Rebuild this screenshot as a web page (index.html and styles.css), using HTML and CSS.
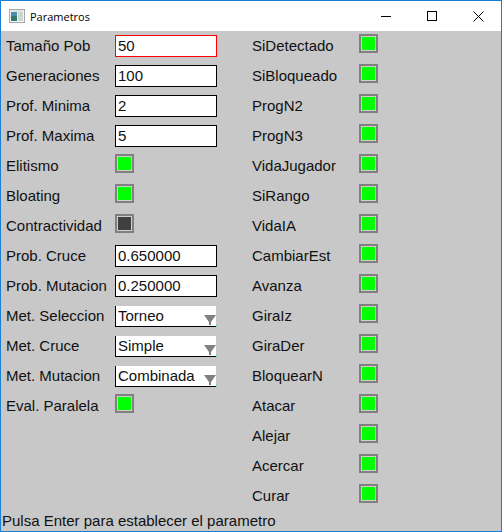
FILE: index.html
```html
<!DOCTYPE html>
<html>
<head>
<meta charset="utf-8">
<link rel="stylesheet" href="styles.css">
</head>
<body>
<div class="window">
  <div class="titlebar">
    <svg class="appicon" width="16" height="14" viewBox="0 0 16 14">
      <rect x="0.5" y="0.5" width="15" height="13" fill="#f4f4f4" stroke="#a9a9a9"/>
      <rect x="2" y="3" width="6" height="9" fill="#2f7a6a"/>
      <rect x="2" y="3" width="6" height="4" fill="#4a8fa8"/>
      <rect x="9" y="3" width="5" height="9" fill="#c9d9d2"/>
      <rect x="2" y="1.5" width="12" height="1" fill="#d0d0d0"/>
    </svg>
    <span class="title">Parametros</span>
    <div class="controls">
      <div class="ctl"><svg width="10" height="10" viewBox="0 0 10 10"><line x1="0" y1="5.5" x2="10" y2="5.5" stroke="#000" stroke-width="1"/></svg></div>
      <div class="ctl"><svg width="10" height="10" viewBox="0 0 10 10"><rect x="0.5" y="0.5" width="9" height="9" fill="none" stroke="#000" stroke-width="1"/></svg></div>
      <div class="ctl"><svg width="11" height="11" viewBox="0 0 11 11"><path d="M0.5 0.5 L10.5 10.5 M10.5 0.5 L0.5 10.5" stroke="#000" stroke-width="1"/></svg></div>
    </div>
  </div>
  <div class="content">
    <div class="left">
      <div class="lbl">Tamaño Pob</div><div class="cell"><div class="field active">50</div></div>
      <div class="lbl">Generaciones</div><div class="cell"><div class="field">100</div></div>
      <div class="lbl">Prof. Minima</div><div class="cell"><div class="field">2</div></div>
      <div class="lbl">Prof. Maxima</div><div class="cell"><div class="field">5</div></div>
      <div class="lbl">Elitismo</div><div class="cell"><div class="check on"></div></div>
      <div class="lbl">Bloating</div><div class="cell"><div class="check on"></div></div>
      <div class="lbl">Contractividad</div><div class="cell"><div class="check off"></div></div>
      <div class="lbl">Prob. Cruce</div><div class="cell"><div class="field">0.650000</div></div>
      <div class="lbl">Prob. Mutacion</div><div class="cell"><div class="field">0.250000</div></div>
      <div class="lbl">Met. Seleccion</div><div class="cell"><div class="combo"><span>Torneo</span><svg class="arrow" width="12" height="11" viewBox="0 0 12 11"><polygon points="0,0 12,0 7,7 7,10 5,10 5,7" fill="#808080"/></svg><i class="dot"></i></div></div>
      <div class="lbl">Met. Cruce</div><div class="cell"><div class="combo"><span>Simple</span><svg class="arrow" width="12" height="11" viewBox="0 0 12 11"><polygon points="0,0 12,0 7,7 7,10 5,10 5,7" fill="#808080"/></svg><i class="dot"></i></div></div>
      <div class="lbl">Met. Mutacion</div><div class="cell"><div class="combo"><span>Combinada</span><svg class="arrow" width="12" height="11" viewBox="0 0 12 11"><polygon points="0,0 12,0 7,7 7,10 5,10 5,7" fill="#808080"/></svg><i class="dot"></i></div></div>
      <div class="lbl">Eval. Paralela</div><div class="cell"><div class="check on"></div></div>
    </div>
    <div class="right">
      <div class="lbl">SiDetectado</div><div class="cell"><div class="check on"></div></div>
      <div class="lbl">SiBloqueado</div><div class="cell"><div class="check on"></div></div>
      <div class="lbl">ProgN2</div><div class="cell"><div class="check on"></div></div>
      <div class="lbl">ProgN3</div><div class="cell"><div class="check on"></div></div>
      <div class="lbl">VidaJugador</div><div class="cell"><div class="check on"></div></div>
      <div class="lbl">SiRango</div><div class="cell"><div class="check on"></div></div>
      <div class="lbl">VidaIA</div><div class="cell"><div class="check on"></div></div>
      <div class="lbl">CambiarEst</div><div class="cell"><div class="check on"></div></div>
      <div class="lbl">Avanza</div><div class="cell"><div class="check on"></div></div>
      <div class="lbl">GiraIz</div><div class="cell"><div class="check on"></div></div>
      <div class="lbl">GiraDer</div><div class="cell"><div class="check on"></div></div>
      <div class="lbl">BloquearN</div><div class="cell"><div class="check on"></div></div>
      <div class="lbl">Atacar</div><div class="cell"><div class="check on"></div></div>
      <div class="lbl">Alejar</div><div class="cell"><div class="check on"></div></div>
      <div class="lbl">Acercar</div><div class="cell"><div class="check on"></div></div>
      <div class="lbl">Curar</div><div class="cell"><div class="check on"></div></div>
    </div>
    <div class="status">Pulsa Enter para establecer el parametro</div>
  </div>
</div>
</body>
</html>
```

FILE: styles.css
```css
html, body {
  margin: 0;
  padding: 0;
  background: #ffffff;
}
.window {
  width: 502px;
  height: 532px;
  box-sizing: border-box;
  border: 1px solid #1b7ed6;
  display: flex;
  flex-direction: column;
  font-family: "Liberation Sans", Arial, sans-serif;
  font-size: 15px;
  color: #111;
}
.titlebar {
  height: 30px;
  flex: none;
  background: #ffffff;
  display: flex;
  align-items: center;
}
.appicon {
  margin-left: 8px;
  margin-top: 0px;
}
.title {
  margin-left: 5px;
  font-family: "Open Sans", "Noto Sans", sans-serif;
  font-size: 11px;
  color: #000;
}
.controls {
  margin-left: auto;
  display: flex;
  height: 30px;
}
.ctl {
  width: 46px;
  height: 30px;
  display: flex;
  align-items: center;
  justify-content: center;
}
.ctl svg { display: block; }
.content {
  flex: 1;
  background: #c8c8c8;
  display: grid;
  grid-template-columns: 246px 1fr;
  grid-template-rows: 480px 20px;
  padding-left: 5px;
}
.left, .right {
  display: grid;
  grid-auto-rows: 30px;
  align-content: start;
}
.left { grid-template-columns: 109px 102px; }
.right { grid-template-columns: 107px 19px; }
.lbl {
  line-height: 30px;
  white-space: nowrap;
}
.cell {
  display: flex;
  align-items: flex-start;
}
.field {
  margin-top: 4px;
  width: 102px;
  height: 22px;
  box-sizing: border-box;
  background: #fff;
  border: 1px solid #000;
  padding-left: 2px;
  line-height: 20px;
}
.field.active { border-color: #ff0000; }
.check {
  margin-top: 3px;
  width: 19px;
  height: 19px;
  box-sizing: border-box;
  border: 2px solid #808080;
  box-shadow: inset 0 0 0 1px #cfcfcf;
}
.check.on { background: #00ff00; }
.check.off { background: #404040; }
.combo {
  position: relative;
  margin-top: 5px;
  width: 101px;
  height: 21px;
  box-sizing: border-box;
  background: #fff;
  border-left: 1px solid #000;
  border-bottom: 1px solid #000;
  display: flex;
  align-items: center;
  padding-left: 2px;
}
.combo span { line-height: 20px; }
.arrow {
  position: absolute;
  right: 0;
  top: 9px;
}
.dot {
  position: absolute;
  right: -1px;
  bottom: 0;
  width: 1px;
  height: 1px;
  background: #00e0e0;
}
.status {
  grid-column: 1 / 3;
  margin-left: -4px;
  line-height: 20px;
}
```
